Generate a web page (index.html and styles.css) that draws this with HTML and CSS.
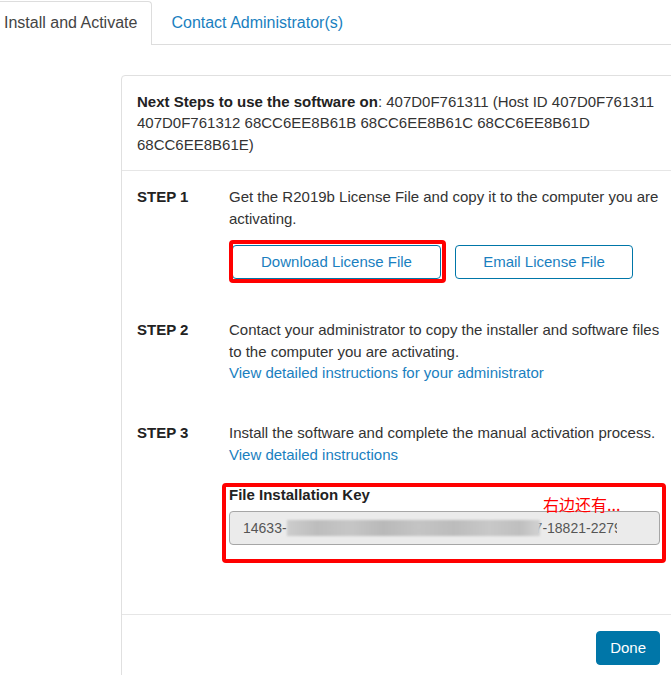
FILE: index.html
```html
<!DOCTYPE html>
<html lang="en">
<head>
<meta charset="utf-8">
<title>Install and Activate</title>
<link rel="stylesheet" href="styles.css">
</head>
<body>
<div class="tabs">
  <div class="tab tab-active">Install and Activate</div>
  <div class="tab tab-link">Contact Administrator(s)</div>
</div>

<div class="card">
  <div class="card-header">
    <b>Next Steps to use the software on</b>: 407D0F761311 (Host ID 407D0F761311 407D0F761312 68CC6EE8B61B 68CC6EE8B61C 68CC6EE8B61D 68CC6EE8B61E)
  </div>

  <div class="card-body">
    <div class="step step-1">
      <div class="step-label">STEP 1</div>
      <div class="step-content">
        <p class="text">Get the R2019b License File and copy it to the computer you are activating.</p>
        <div class="btns">
          <div class="annot-wrap">
            <button class="btn btn-outline btn-download">Download License File</button>
            <span class="annot annot-download"></span>
          </div>
          <button class="btn btn-outline btn-email">Email License File</button>
        </div>
      </div>
    </div>

    <div class="step step-2">
      <div class="step-label">STEP 2</div>
      <div class="step-content">
        <p class="text">Contact your administrator to copy the installer and software files to the computer you are activating.</p>
        <a class="link" href="#">View detailed instructions for your administrator</a>
      </div>
    </div>

    <div class="step step-3">
      <div class="step-label">STEP 3</div>
      <div class="step-content">
        <p class="text">Install the software and complete the manual activation process.</p>
        <a class="link" href="#">View detailed instructions</a>

        <div class="key-block">
          <div class="key-label">File Installation Key</div>
          <div class="key-input">
            <span class="key-text"><span>14633-</span><span class="blur"></span><span class="key-tail">7-18821-2279</span></span>
          </div>
          <span class="annot annot-key"></span>
          <span class="annot-note">右边还有...</span>
        </div>
      </div>
    </div>
  </div>

  <div class="card-footer">
    <button class="btn btn-primary">Done</button>
  </div>
</div>
</body>
</html>
```

FILE: styles.css
```css
html, body {
  margin: 0;
  padding: 0;
  overflow: hidden;
  background: #fff;
}

body {
  font-family: "Liberation Sans", Arial, sans-serif;
  font-size: 15px;
  line-height: 1.42857;
  color: #333;
}

.tabs {
  display: flex;
  align-items: flex-start;
  height: 44px;
  border-bottom: 1px solid #ddd;
}

.tab {
  box-sizing: border-box;
  font-size: 16px;
  line-height: 42px;
  white-space: nowrap;
}

.tab-active {
  margin-top: 1px;
  height: 44px;
  padding: 0 14px 0 4px;
  background: #fff;
  border-top: 1px solid #ddd;
  border-right: 1px solid #ddd;
  border-radius: 0 4px 0 0;
  color: #444;
}

.tab-link {
  margin-top: 1px;
  padding: 0 15px 0 19px;
  border-top: 1px solid transparent;
  color: #1a7fc0;
}

.card {
  margin: 30px -6px 0 121px;
  border: 1px solid #e0e0e0;
  border-radius: 4px;
  background: #fff;
}

.card-header {
  padding: 15px 15px;
  border-bottom: 1px solid #e6e6e6;
  color: #333;
}

.card-header b {
  color: #222;
}

.card-body {
  padding: 15px 15px 69px;
}

.step {
  display: flex;
}

.step-1 {
  margin-bottom: 40px;
}

.step-2 {
  margin-bottom: 39px;
}

.step-label {
  flex: 0 0 92px;
  font-weight: bold;
  color: #222;
}

.step-content {
  flex: 1;
  min-width: 0;
}

.text {
  margin: 0;
}

.link {
  color: #1a7fc0;
  text-decoration: none;
}

.btns {
  display: flex;
  gap: 14px;
  margin-top: 16px;
}

.btn {
  box-sizing: border-box;
  height: 34px;
  font-family: "Liberation Sans", Arial, sans-serif;
  font-size: 15px;
  line-height: 20px;
  border-radius: 4px;
  cursor: pointer;
}

.btn-outline {
  border: 1px solid #0076a8;
  background: #fff;
  color: #1a7fc0;
}

.btn-download {
  width: 209px;
  margin-left: 3px;
}

.btn-email {
  width: 178px;
}

.btn-primary {
  padding: 0 13px;
  border: 1px solid #0076a8;
  background: #0076a8;
  color: #fff;
}

.annot-wrap {
  position: relative;
  display: flex;
}

.annot {
  position: absolute;
  border: 4px solid #ff0000;
  border-radius: 4px;
  pointer-events: none;
}

.annot-download {
  left: 0;
  right: -5px;
  top: -5px;
  bottom: -4px;
}

.key-block {
  position: relative;
  margin-top: 19px;
}

.key-label {
  font-weight: bold;
  color: #222;
}

.key-input {
  box-sizing: border-box;
  height: 34px;
  margin: 5px 1px 0 0;
  padding: 0 13px;
  background: #ebebeb;
  border: 1px solid #a6a6a6;
  border-radius: 4px;
  font-size: 14px;
  line-height: 32px;
  color: #555;
}

.key-text {
  display: block;
  width: 374px;
  overflow: hidden;
  white-space: nowrap;
}

.blur {
  position: relative;
  z-index: 1;
  display: inline-block;
  width: 253px;
  height: 16px;
  vertical-align: -3px;
  background: linear-gradient(90deg, #cdcdcd 0%, #bdbdbd 12%, #c6c6c6 25%, #b9b9b9 38%, #c4c4c4 52%, #bcbcbc 66%, #c8c8c8 80%, #bfbfbf 92%, #d2d2d2 100%);
  filter: blur(1.2px);
}

.key-tail {
  margin-left: -5px;
}

.annot-key {
  left: -7px;
  right: -5px;
  top: -1px;
  bottom: -18px;
}

.annot-note {
  position: absolute;
  left: 314px;
  top: 12px;
  font-family: "Noto Sans CJK SC", "Liberation Sans", sans-serif;
  font-size: 16px;
  line-height: 16px;
  color: #ff0000;
  white-space: nowrap;
}

.card-footer {
  padding: 16px 16px 20px 15px;
  border-top: 1px solid #e6e6e6;
  text-align: right;
}
```
